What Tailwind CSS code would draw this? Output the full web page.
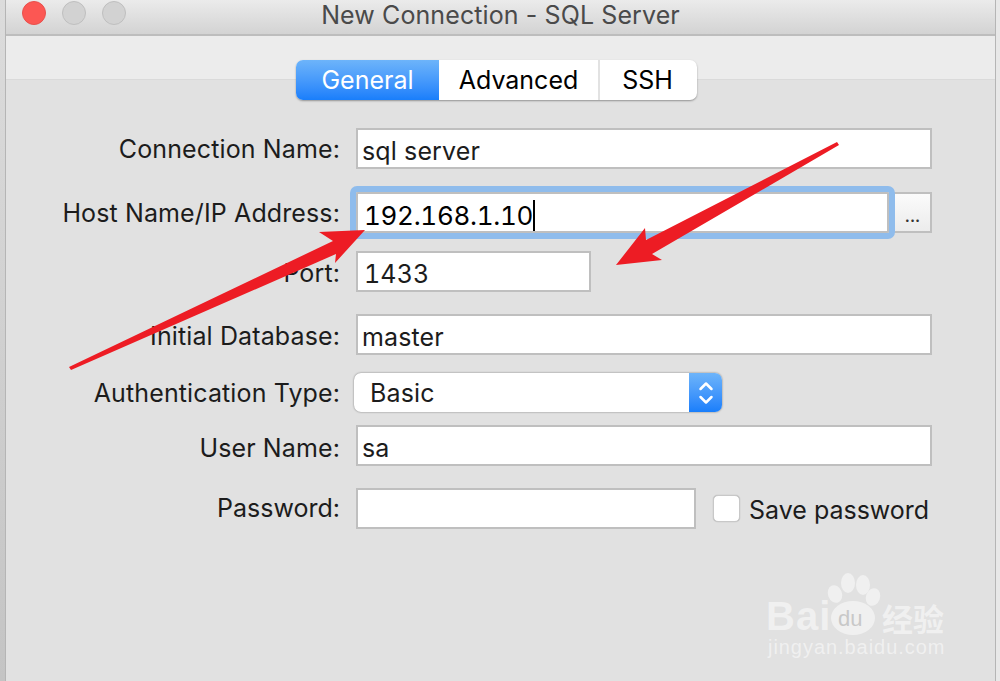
<!DOCTYPE html>
<html lang="en">
<head>
    <meta charset="UTF-8">
    <meta name="viewport" content="width=device-width, initial-scale=1.0">
    <title>New Connection - SQL Server</title>
    <script src="https://cdn.jsdelivr.net/npm/@tailwindcss/browser@4"></script>
</head>
<body class="relative w-[1000px] h-[681px] overflow-hidden flex bg-[#e4e4e4] font-['Inter','Noto_Sans_CJK_SC',sans-serif] text-[25px] tracking-[0.12px] text-[#1c1c1c]">
    <!-- Left edge of the desktop behind the window -->
    <div class="w-[5px] bg-gradient-to-b from-[#dcdcdc] to-[#c4c4c4]"></div>

    <div class="w-[991px] flex flex-col border-l border-r border-[#b5b5b5]">
        <!-- Title bar -->
        <div class="relative h-[36px] flex items-center justify-center border-b-2 border-[#bdbdbd] bg-gradient-to-b from-[#ebebeb] to-[#d3d3d3]">
            <div class="absolute left-[16px] top-[1px] flex gap-[16px]">
                <div class="w-[24px] h-[24px] rounded-full bg-[#fc5753] border border-[#e8504c]"></div>
                <div class="w-[24px] h-[24px] rounded-full bg-[#d2d2d2] border border-[#bfbfbf]"></div>
                <div class="w-[24px] h-[24px] rounded-full bg-[#d2d2d2] border border-[#bfbfbf]"></div>
            </div>
            <span class="text-[#4a4a4a] leading-[28px] -mt-[4px] tracking-[0.1px]">New Connection - SQL Server</span>
        </div>

        <!-- Toolbar band with the tabs across its lower edge -->
        <div class="relative h-[44px] bg-[#ececec] border-b border-[#dadada]">
            <div class="absolute left-[290px] top-[24px] flex h-[40px] w-[401px] rounded-[7px] bg-white shadow-[0_1px_2px_rgba(0,0,0,0.35)] overflow-hidden text-black tracking-normal">
                <div class="w-[143px] pt-[2px] flex items-center justify-center text-white bg-gradient-to-b from-[#6db4fa] to-[#187efb]">General</div>
                <div class="w-[161px] pt-[2px] flex items-center justify-center border-r-2 border-[#e2e2e2]">Advanced</div>
                <div class="flex-1 pt-[2px] pr-[2px] flex items-center justify-center">SSH</div>
            </div>
        </div>

        <!-- Form -->
        <div class="flex-1 bg-[#e1e1e1] pt-[48px] pl-[15px]">
            <div class="flex items-center h-[41px]">
                <div class="w-[319px] text-right pt-[3px]">Connection Name:</div>
                <div class="ml-[16px] w-[576px] h-[41px] pl-[4px] pt-[3px] bg-white border-2 border-[#bfbfbf]">sql server</div>
            </div>

            <div class="flex items-center h-[41px] mt-[23px]">
                <div class="w-[319px] text-right pt-[2px]">Host Name/IP Address:</div>
                <div class="relative ml-[16px] w-[533px] h-[41px] pl-[6px] pt-[2px] bg-white border-2 border-[#bfbfbf] text-[26px] tracking-[-0.3px] tabular-nums text-black outline-[6px] outline-[#8fbcec] rounded-[1px]">
                    <span class="border-r-2 border-black">192.168.1.10</span>
                </div>
                <div class="ml-[4px] w-[39px] h-[41px] pt-[6px] flex items-center justify-center border-2 border-[#bfbfbf] bg-gradient-to-b from-[#fbfbfb] to-[#ececec] text-[16px] font-semibold text-[#333]">...</div>
            </div>

            <div class="flex items-center h-[41px] mt-[18px]">
                <div class="w-[319px] text-right pt-[4px]">Port:</div>
                <div class="ml-[16px] w-[235px] h-[41px] pl-[6px] pt-[3px] bg-white border-2 border-[#bfbfbf] tabular-nums">1433</div>
            </div>

            <div class="flex items-center h-[41px] mt-[22px]">
                <div class="w-[319px] text-right pt-[4px]">Initial Database:</div>
                <div class="ml-[16px] w-[576px] h-[41px] pl-[4px] pt-[3px] bg-white border-2 border-[#bfbfbf]">master</div>
            </div>

            <div class="flex items-center h-[39px] mt-[18px]">
                <div class="w-[319px] text-right pt-[2px]">Authentication Type:</div>
                <div class="ml-[14px] w-[368px] h-[39px] flex bg-white rounded-[7px] shadow-[0_0_2px_rgba(0,0,0,0.5)] overflow-hidden">
                    <div class="flex-1 pl-[16px] pt-[2px] flex items-center">Basic</div>
                    <div class="w-[33px] flex items-center justify-center bg-gradient-to-b from-[#6db4fa] to-[#187efb]">
                        <svg width="18" height="28" viewBox="0 0 18 28" fill="none" stroke="white" stroke-width="2.5" stroke-linecap="round" stroke-linejoin="round">
                            <path d="M3.5 10 L9 4.5 L14.5 10" />
                            <path d="M3.5 18 L9 23.5 L14.5 18" />
                        </svg>
                    </div>
                </div>
            </div>

            <div class="flex items-center h-[41px] mt-[13px]">
                <div class="w-[319px] text-right pt-[6px]">User Name:</div>
                <div class="ml-[16px] w-[576px] h-[41px] pl-[4px] pt-[3px] bg-white border-2 border-[#bfbfbf]">sa</div>
            </div>

            <div class="flex items-center h-[41px] mt-[22px]">
                <div class="w-[319px] text-right tracking-normal">Password:</div>
                <div class="ml-[16px] w-[340px] h-[41px] bg-white border-2 border-[#bfbfbf]"></div>
                <div class="ml-[17px] w-[27px] h-[27px] bg-white rounded-[5px] border border-[#c8c8c8] shadow-[0_0_1px_rgba(0,0,0,0.3)]"></div>
                <div class="ml-[9px] pt-[4px] tracking-normal">Save password</div>
            </div>
        </div>
    </div>

    <div class="flex-1 bg-[#e8e8e8]"></div>

    <!-- Baidu watermark -->
    <div class="absolute left-[764px] top-[572px] w-[190px] h-[92px] text-white/50">
        <svg class="absolute left-0 top-0" width="190" height="92" viewBox="0 0 190 92" fill="currentColor">
            <ellipse cx="84" cy="11" rx="7" ry="10" />
            <ellipse cx="99" cy="13" rx="7" ry="10" />
            <ellipse cx="71" cy="22" rx="7" ry="9" transform="rotate(-20 71 22)" />
            <ellipse cx="109" cy="25" rx="7" ry="9" transform="rotate(20 109 25)" />
            <ellipse cx="89" cy="46" rx="22" ry="17" />
        </svg>
        <span class="absolute left-[2px] top-[20px] text-[40px] leading-[48px] font-bold font-['Liberation_Sans'] tracking-[1px]">Bai</span>
        <span class="absolute left-[74px] top-[33px] text-[22px] leading-[28px] font-normal font-['Liberation_Sans'] text-[#c8c8c8]">du</span>
        <span class="absolute left-[118px] top-[28px] text-[31px] leading-[36px] font-bold font-['Noto_Sans_CJK_SC']">经验</span>
        <span class="absolute left-[4px] top-[61px] text-[20px] leading-[28px] font-['Liberation_Sans'] tracking-[0.95px]">jingyan.baidu.com</span>
    </div>

    <!-- Red annotation arrows -->
    <svg class="absolute left-0 top-0 pointer-events-none" width="1000" height="681" viewBox="0 0 1000 681" fill="#ed1c24">
        <polygon points="69,367 333,241 319,232 365,230 335,263 336,254 71,370" />
        <polygon points="837,142 839,145 652,254 662,260 616,265 645,228 646,240" />
    </svg>
</body>
</html>
